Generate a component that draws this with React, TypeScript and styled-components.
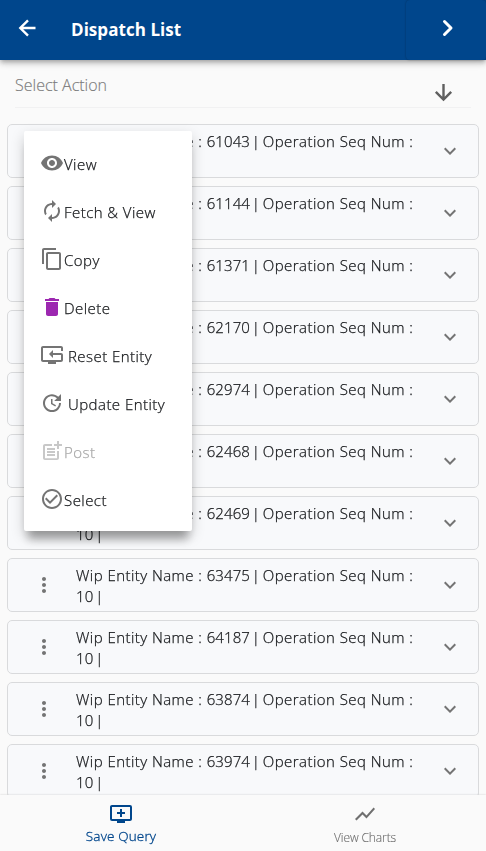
import React from "react";
import styled, { createGlobalStyle } from "styled-components";
import {
  MdAddToQueue, MdAutorenew, MdCheckCircleOutline,
  MdContentCopy, MdDelete, MdExpandMore, MdMoreVert, MdPostAdd, MdResetTv,
  MdShowChart, MdUpdate, MdVisibility,
} from "react-icons/md";

const GlobalStyle = createGlobalStyle`
  * { box-sizing: border-box; }
  body { margin: 0; background: #fafafa; font-family: "Open Sans", "Noto Sans", sans-serif; }
  button { font: inherit; border: 0; padding: 0; background: none; color: inherit; }
  svg { display: block; flex-shrink: 0; }
`;

const Screen = styled.div`
  display: flex;
  flex-direction: column;
  width: 486px;
  height: 851px;
  overflow: hidden;
  background: #fafafa;
`;

const AppBar = styled.header`
  display: flex;
  align-items: stretch;
  height: 60px;
  flex-shrink: 0;
  z-index: 1;
  color: #fff;
  background: #00468c;
  box-shadow: 0 2px 4px -1px rgba(0,0,0,.2), 0 4px 5px rgba(0,0,0,.14), 0 1px 10px rgba(0,0,0,.12);
`;

const BackButton = styled.button`
  display: flex;
  padding: 16px 15px;
`;

const Title = styled.h1`
  flex: 1;
  margin: 0 0 0 17px;
  font-size: 17px;
  font-weight: 700;
  line-height: 60px;
  letter-spacing: 0.05px;
`;

const NextButton = styled.button`
  display: flex;
  width: 80px;
  padding: 16px 0 0 29px;
  border-radius: 4px;
  box-shadow: 0 0 2px rgba(0,0,0,.35);
`;

const Search = styled.div`
  display: flex;
  justify-content: space-between;
  flex-shrink: 0;
  height: 48px;
  margin: 0 15px;
  border-bottom: 1px solid #f1f1f2;
`;

const SearchLabel = styled.span`
  padding-top: 13px;
  font-size: 16px;
  font-weight: 300;
  line-height: 24px;
  color: #7c7c7c;
  -webkit-text-stroke: 0.15px currentColor;
`;

const SortButton = styled.button`
  display: flex;
  align-items: flex-start;
  padding: 20px 16px 0 0;
  color: #5f5f5f;
`;

const Content = styled.main`
  position: relative;
  flex: 1;
  min-height: 0;
  overflow: hidden;
`;

const List = styled.div`
  display: flex;
  flex-direction: column;
  gap: 8px;
  padding: 16px 7px 0;
  will-change: transform;
`;

const Row = styled.article`
  display: flex;
  flex-shrink: 0;
  height: 54px;
  border: 1px solid #d9dadc;
  border-radius: 5px;
  background: #f8f9fb;
  color: #747474;
`;

const RowMenuButton = styled.button`
  display: flex;
  align-items: center;
  width: 68px;
  padding-left: 24px;
`;

const RowText = styled.p`
  width: 342px;
  margin: 6px 8px 0 0;
  font-size: 15px;
  font-weight: 300;
  line-height: 21px;
  letter-spacing: 0.45px;
  color: #16181b;
  -webkit-text-stroke: 0.25px currentColor;
`;

const Digits = styled.span`
  letter-spacing: 0.1px;
`;

const Bar = styled.span`
  margin: 0 -2px 0 -2.5px;
`;

const ExpandButton = styled.button`
  display: flex;
  align-items: center;
  padding-left: 12px;
`;

const Menu = styled.div`
  position: absolute;
  left: 24px;
  top: 23px;
  display: flex;
  flex-direction: column;
  width: 168px;
  height: 400px;
  padding: 8px 0;
  border-radius: 2px;
  background: #fff;
  box-shadow: 0 12px 9px -4px rgba(0,0,0,.3), 0 5px 14px rgba(0,0,0,.18);
`;

const MenuItem = styled.button<{ $disabled?: boolean; $spaced?: boolean }>`
  display: flex;
  align-items: center;
  gap: ${(p) => (p.$spaced ? 4 : 0)}px;
  height: 48px;
  padding-left: 16px;
  color: ${(p) => (p.$disabled ? "#a9a9a9" : "#16181b")};
`;

const MenuIcon = styled.span<{ $color?: string }>`
  color: ${(p) => p.$color ?? "#747474"};
`;

const MenuLabel = styled.span`
  padding-top: 2px;
  font-size: 15px;
  font-weight: 300;
  line-height: 24px;
  letter-spacing: 0.45px;
  white-space: nowrap;
  -webkit-text-stroke: 0.25px currentColor;
`;

const BottomNav = styled.nav`
  display: flex;
  flex-shrink: 0;
  height: 56px;
  z-index: 1;
  background: #fafafa;
  box-shadow: 0 0 2px rgba(0,0,0,.18);
`;

const NavItem = styled.button<{ $active?: boolean }>`
  display: flex;
  flex-direction: column;
  align-items: center;
  width: ${(p) => (p.$active ? 242 : 244)}px;
  padding: 7px 0 0 ${(p) => (p.$active ? 0 : 2)}px;
  color: ${(p) => (p.$active ? "#00468c" : "#6f6f6f")};
`;

const NavLabel = styled.span<{ $active?: boolean }>`
  margin-top: ${(p) => (p.$active ? 0 : 2)}px;
  font-size: ${(p) => (p.$active ? 13.5 : 12)}px;
  font-weight: 300;
  line-height: 20px;
  letter-spacing: ${(p) => (p.$active ? 0.15 : -0.1)}px;
  -webkit-text-stroke: ${(p) => (p.$active ? 0.3 : 0.15)}px currentColor;
`;

const ArrowIcon = ({ down = false }: { down?: boolean }) => (
  <svg width="24" height="24" viewBox="0 0 24 24" fill="none" stroke="currentColor" strokeWidth="2.4">
    {down
      ? <path d="M12.5 4v15M4.8 11.8l7.7 7.7 7.7-7.7" />
      : <path d="M20.5 12H5.5M13 4.3L5.3 12l7.7 7.7" />}
  </svg>
);

const ORDERS = ["61043", "61144", "61371", "62170", "62974", "62468", "62469", "63475", "64187", "63874", "63974"];

const ACTIONS = [
  { label: "View", Icon: MdVisibility },
  { label: "Fetch & View", Icon: MdAutorenew },
  { label: "Copy", Icon: MdContentCopy },
  { label: "Delete", Icon: MdDelete, color: "#9c27b0" },
  { label: "Reset Entity", Icon: MdResetTv, spaced: true },
  { label: "Update Entity", Icon: MdUpdate, spaced: true },
  { label: "Post", Icon: MdPostAdd, color: "#c8c8c8", disabled: true },
  { label: "Select", Icon: MdCheckCircleOutline },
];

export default function App() {
  return (
    <Screen>
      <GlobalStyle />
      <AppBar>
        <BackButton aria-label="Back"><ArrowIcon /></BackButton>
        <Title>Dispatch List</Title>
        <NextButton aria-label="Next">
          <svg width="24" height="24" viewBox="0 0 24 24" fill="none" stroke="currentColor" strokeWidth="3" strokeLinecap="round" strokeLinejoin="round">
            <path d="M9.5 5.5l6.5 6.5-6.5 6.5" />
          </svg>
        </NextButton>
      </AppBar>
      <Search>
        <SearchLabel>Select Action</SearchLabel>
        <SortButton aria-label="Sort"><ArrowIcon down /></SortButton>
      </Search>
      <Content>
        <List>
          {ORDERS.map((id) => (
            <Row key={id}>
              <RowMenuButton aria-label="Actions"><MdMoreVert size={24} /></RowMenuButton>
              <RowText>
                Wip Entity Name : <Digits>{id}</Digits> <Bar>|</Bar> Operation Seq Num : <Digits>10</Digits> <Bar>|</Bar>
              </RowText>
              <ExpandButton aria-label="Expand"><MdExpandMore size={24} /></ExpandButton>
            </Row>
          ))}
        </List>
        <Menu>
          {ACTIONS.map(({ label, Icon, color, disabled, spaced }) => (
            <MenuItem key={label} $disabled={disabled} $spaced={spaced}>
              <MenuIcon $color={color}><Icon size={24} /></MenuIcon>
              <MenuLabel>{label}</MenuLabel>
            </MenuItem>
          ))}
        </Menu>
      </Content>
      <BottomNav>
        <NavItem $active>
          <MdAddToQueue size={24} />
          <NavLabel $active>Save Query</NavLabel>
        </NavItem>
        <NavItem>
          <MdShowChart size={24} />
          <NavLabel>View Charts</NavLabel>
        </NavItem>
      </BottomNav>
    </Screen>
  );
}
